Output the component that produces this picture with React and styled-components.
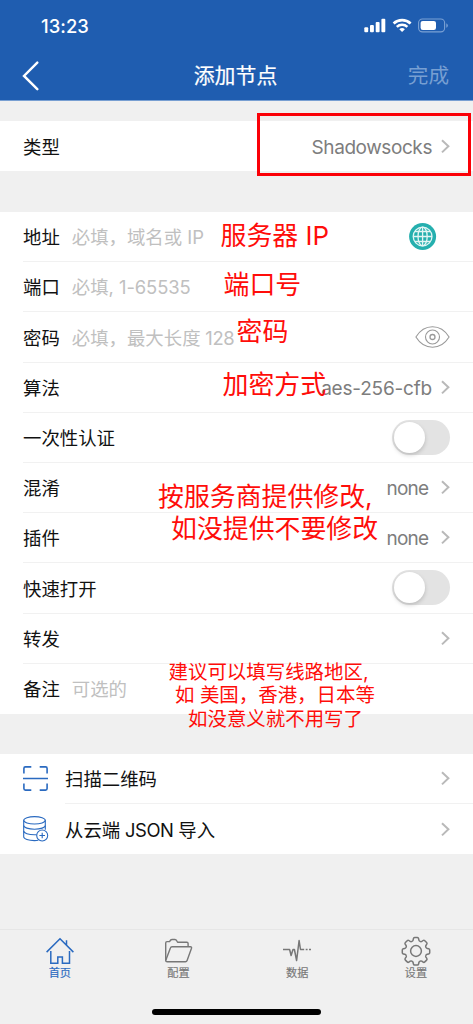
import React from 'react';
import styled, { createGlobalStyle } from 'styled-components';

const theme = {
    blue: '#1f5db0',
    iconBlue: '#2a6ac0',
    page: '#f0f0f0',
    line: '#f1f1f1',
    red: '#ff0d0a',
    grey: '#7d7d7d',
    placeholder: '#c0c0c0',
    font: "Inter, 'Noto Sans CJK SC', sans-serif",
};

const GlobalStyle = createGlobalStyle`
    * {
        box-sizing: border-box;
    }
    body {
        margin: 0;
        background: ${theme.page};
        font-family: ${theme.font};
    }
`;

const Screen = styled.div`
    position: relative;
    display: flex;
    flex-direction: column;
    width: 473px;
    height: 1024px;
    overflow: hidden;
    background: ${theme.page};
    color: #111;
`;

const Header = styled.header`
    height: 101px;
    flex: none;
    background: ${theme.blue};
    border-bottom: 1px solid #789fd2;
    color: #fff;
`;

const StatusBar = styled.div`
    display: flex;
    align-items: center;
    justify-content: space-between;
    height: 51px;
    padding: 0 24px 0 41px;
`;

const Time = styled.span`
    font-size: 18.4px;
    font-weight: 500;
    letter-spacing: 0.05px;
`;

const TitleBar = styled.div`
    display: grid;
    grid-template-columns: 1fr auto 1fr;
    align-items: center;
    height: 49px;
    padding: 0 24px 0 22px;
`;

const Title = styled.h1`
    margin: 0;
    font-size: 20.9px;
    font-weight: 400;
    line-height: 30px;
    -webkit-text-stroke: 0.2px #fff;
`;

const Done = styled.span`
    justify-self: end;
    padding-top: 1px;
    font-size: 20.6px;
    line-height: 30px;
    color: #779fd2;
`;

const Group = styled.section`
    flex: none;
    margin-top: ${props => props.gap}px;
    padding-left: ${props => props.inset || 23}px;
    background: #fff;
`;

const Row = styled.div`
    display: flex;
    align-items: center;
    height: ${props => props.height || 50.2}px;
    padding-right: 23px;
    border-bottom: 1px solid ${theme.line};
    font-size: 18.4px;
    line-height: 28px;
    &:last-child {
        border-bottom: 0;
    }
`;

const Label = styled.span`
    white-space: pre;
    padding-top: 1.4px;
`;

const Latin = styled.span`
    letter-spacing: ${props => props.tracking}px;
`;

const Placeholder = styled.span`
    margin-left: 12px;
    padding-top: 1.4px;
    color: ${theme.placeholder};
    white-space: pre;
`;

const Value = styled.span`
    padding-top: 3px;
    margin-right: ${props => props.shift || 0}px;
    font-size: 19px;
    color: ${theme.grey};
    letter-spacing: ${props => props.tracking || 0}px;
`;

const Trailing = styled.div`
    display: flex;
    align-items: center;
    gap: 9px;
    margin-left: auto;
    margin-right: ${props => props.shift || 0}px;
`;

const Toggle = styled.div`
    width: 58px;
    height: 35px;
    padding: 2px;
    border-radius: 18px;
    background: #e3e3e3;
    &::after {
        content: '';
        display: block;
        width: 31px;
        height: 31px;
        border-radius: 50%;
        background: #fff;
        box-shadow: 0 2px 4px rgba(0, 0, 0, 0.18);
    }
`;

const ActionIcon = styled.span`
    display: flex;
    width: 42px;
    margin-left: -42px;
`;

const TabBar = styled.nav`
    display: grid;
    grid-template-columns: repeat(4, 118.7px);
    height: 95px;
    flex: none;
    margin-top: auto;
    border-top: 1px solid #e6e6e6;
`;

const Tab = styled.div`
    display: flex;
    flex-direction: column;
    align-items: center;
    padding-top: 6px;
    padding-left: 1px;
    font-size: 11.2px;
    line-height: 14px;
    color: ${props => (props.active ? theme.iconBlue : '#777')};
    -webkit-text-stroke: 0.15px currentColor;
`;

const HomeIndicator = styled.div`
    position: absolute;
    left: 152px;
    bottom: 9px;
    width: 169px;
    height: 6px;
    border-radius: 3px;
    background: #000;
`;

// Red marker notes drawn over the form
const Note = styled.div`
    position: absolute;
    left: ${props => props.x}px;
    top: ${props => props.y}px;
    font-size: ${props => (props.small ? 19.45 : 25.9)}px;
    line-height: ${props => (props.small ? 23.3 : 31.5)}px;
    color: ${theme.red};
    white-space: pre;
`;

const NoteLine = styled.div`
    padding-left: ${props => props.indent || 0}px;
`;

const Frame = styled.div`
    position: absolute;
    left: 257px;
    top: 113px;
    width: 214px;
    height: 63px;
    border: 3px solid #fb0007;
`;

const Chevron = () => (
    <svg width="9" height="15" viewBox="0 0 9 15" fill="none" stroke="#b9b9b9" strokeWidth="2">
        <path d="M1 1.2 7.4 7.3 1 13.4" />
    </svg>
);

const BackIcon = () => (
    <svg width="18" height="30" viewBox="0 0 18 30" fill="none" stroke="#fff" strokeWidth="2.4" strokeLinecap="round">
        <path d="M15.3 1.6 2 14.900 15.300 28.200" />
    </svg>
);

const StatusIcons = () => (
    <svg width="85" height="16" viewBox="0 0 85 16" fill="#fff">
        <rect x="0.3" y="9.2" width="3.9" height="5" rx="1" />
        <rect x="6" y="7" width="3.9" height="7.2" rx="1" />
        <rect x="11.7" y="4" width="3.9" height="10.2" rx="1" />
        <rect x="17.4" y="0.8" width="3.9" height="13.4" rx="1" />
        <g fill="none" stroke="#fff">
            <path d="M29.6 5.5a12.4 12.4 0 0 1 17 0" strokeWidth="2.7" />
            <path d="M32.8 8.9a7.7 7.7 0 0 1 10.6 0" strokeWidth="2.5" />
        </g>
        <path d="M38.1 13.9 35.3 11.2a4.1 4.1 0 0 1 5.6 0z" />
        <rect x="54.6" y="1" width="26" height="12.9" rx="3.8" fill="none" stroke="#7ba1d4" strokeWidth="1.1" />
        <rect x="56.6" y="2.9" width="15.4" height="9.1" rx="2.2" />
        <path d="M82.3 5.2a2.5 2.5 0 0 1 0 4.6z" fill="#7ba1d4" />
    </svg>
);

const GlobeIcon = () => (
    <svg width="28" height="28" viewBox="0 0 28 28" fill="none" stroke="#e2f5f4" strokeWidth="1.3">
        <circle cx="13.6" cy="13.5" r="13.5" fill="#25afae" stroke="none" />
        <circle cx="13.6" cy="13.5" r="9.4" />
        <ellipse cx="13.6" cy="13.5" rx="4.6" ry="9.4" />
        <path d="M13.6 4.1v18.800M4.200 13.500h18.800M5.800 8.500h15.600M5.800 18.500h15.600" />
    </svg>
);

const EyeIcon = () => (
    <svg width="35" height="22" viewBox="0 0 35 22" fill="none" stroke="#999" strokeWidth="1.1">
        <path d="M.9 11C4.9 4.6 10.8.8 17.5.8S30.1 4.6 34.1 11c-4 6.4-9.9 10.2-16.6 10.2S4.9 17.4.9 11z" />
        <circle cx="17.5" cy="11" r="7" />
        <circle cx="17.5" cy="11" r="2.5" strokeWidth="1.3" />
    </svg>
);

const ScanIcon = () => (
    <svg width="25" height="25" viewBox="0 0 25 25" fill="none" stroke={theme.iconBlue} strokeWidth="1.6">
        <path d="M.9 7.6V2.4q0-1.500 1.500-1.500h5.900M16.700.9h5.900q1.500 0 1.500 1.500v5.200M24.100 17.400v5.200q0 1.500-1.500 1.500h-5.900M8.300 24.100H2.400q-1.500 0-1.500-1.500v-5.200M0 12.500h25" />
    </svg>
);

const CloudDataIcon = () => (
    <svg width="26" height="26" viewBox="0 0 26 26" fill="none" stroke={theme.iconBlue} strokeWidth="1.1">
        <ellipse cx="11.5" cy="4.3" rx="10.8" ry="3.7" />
        <path d="M.7 4.3v16.400c0 2.200 4.800 3.900 10.800 3.900 1.400 0 2.700-.1 3.900-.3M22.300 4.300v9.500" />
        <path d="M.7 9.500c0 2.100 4.800 3.700 10.800 3.700s10.800-1.600 10.800-3.700M.7 15.100c0 2.100 4.800 3.700 10.800 3.700.7 0 1.400 0 2.100-.1" />
        <circle cx="19.2" cy="19.5" r="5.5" />
        <path d="M19.2 16.700v5.600M16.400 19.500h5.600" />
    </svg>
);

const HomeIcon = () => (
    <svg width="30" height="30" viewBox="0 0 30 30" fill="none" stroke="currentColor" strokeWidth="1.5">
        <path d="M1.600 16.100 15 2.700l13.400 13.400M21.500 9V4.200" />
        <path d="M5.800 15v12.200h7v-6.300h4.600v6.300h7.100V15" />
    </svg>
);

const FolderIcon = () => (
    <svg width="30" height="30" viewBox="0 0 30 30" fill="none" stroke="currentColor" strokeWidth="1.4" strokeLinejoin="round">
        <path d="M1.700 24.500V6.900q0-1.300 1.300-1.300h2.500q1.200-2.100 2.500-2.100h3q1.300 0 2.600 2.700h9.300q1.200 0 1.200 1.200v3.300" />
        <path d="M1.700 24.500q0 1.200 1.500 1.200h18.300q1.200 0 1.600-1.200l4.400-12.300q.4-1.500-1.100-1.500H8q-1.200 0-1.600 1.200z" />
    </svg>
);

const PulseIcon = () => (
    <svg width="30" height="30" viewBox="0 0 30 30" fill="none" stroke="currentColor" strokeWidth="1.5" strokeLinejoin="round">
        <path d="M1 13.500h6.600l1.500 6L11 13.500h1.400l2.200 11L17.100 4.500l1.400 9h3.700M23.700 13.500h1.900M27 13.500h2" />
    </svg>
);

// Eight rounded teeth round the hub
const GearIcon = () => (
    <svg width="30" height="30" viewBox="0 0 30 30" fill="none" stroke="currentColor" strokeWidth="1.5" strokeLinejoin="round">
        <path d="M13.600 1.600h2.800q1 0 1.200 1l.3 1.500q.2.900 1.100 1.300 1 .5 1.800 0l1.300-.9q.9-.6 1.700.2l1.800 1.800q.8.800.2 1.700l-.9 1.300q-.5.800 0 1.800.4.900 1.300 1.100l1.500.3q1 .2 1 1.200v2.800q0 1-1 1.200l-1.500.3q-.9.200-1.300 1.100-.5 1 0 1.800l.9 1.300q.6.900-.2 1.700l-1.800 1.800q-.8.800-1.700.2l-1.300-.9q-.8-.5-1.800 0-.9.400-1.100 1.300l-.3 1.500q-.2 1-1.200 1h-2.800q-1 0-1.200-1l-.3-1.500q-.2-.9-1.100-1.300-1-.5-1.800 0l-1.300.9q-.9.600-1.700-.2l-1.800-1.800q-.8-.8-.2-1.700l.9-1.300q.5-.8 0-1.800-.4-.9-1.300-1.100l-1.500-.3q-1-.2-1-1.200v-2.800q0-1 1-1.200l1.500-.3q.9-.2 1.300-1.100.5-1 0-1.800l-.9-1.300q-.6-.9.200-1.700l1.800-1.800q.8-.8 1.700-.2l1.300.9q.8.500 1.800 0 .9-.4 1.100-1.300l.3-1.500q.2-1 1.200-1z" />
        <circle cx="15" cy="15" r="5.4" />
    </svg>
);

const Link = ({ value, tracking, shift }) => (
    <Trailing>
        {value && (
            <Value tracking={tracking} shift={shift}>
                {value}
            </Value>
        )}
        <Chevron />
    </Trailing>
);

const App = () => (
    <Screen lang="zh-CN">
        <GlobalStyle />
        <Header>
            <StatusBar>
                <Time>13:23</Time>
                <StatusIcons />
            </StatusBar>
            <TitleBar>
                <BackIcon />
                <Title>添加节点</Title>
                <Done>完成</Done>
            </TitleBar>
        </Header>

        <Group gap={20}>
            <Row height={50}>
                <Label>类型</Label>
                <Link value="Shadowsocks" tracking={-0.42} />
            </Row>
        </Group>

        <Group gap={41}>
            <Row>
                <Label>地址</Label>
                <Placeholder>必填，域名或 IP</Placeholder>
                <Trailing shift={13}>
                    <GlobeIcon />
                </Trailing>
            </Row>
            <Row>
                <Label>端口</Label>
                <Placeholder>
                    必填, <Latin tracking={-0.1}>1-65535</Latin>
                </Placeholder>
            </Row>
            <Row>
                <Label>密码</Label>
                <Placeholder>
                    必填，最大长度<Latin tracking={-0.4}> 128</Latin>
                </Placeholder>
                <Trailing>
                    <EyeIcon />
                </Trailing>
            </Row>
            <Row>
                <Label>算法</Label>
                <Link value="aes-256-cfb" tracking={-0.2} />
            </Row>
            <Row>
                <Label>一次性认证</Label>
                <Trailing>
                    <Toggle />
                </Trailing>
            </Row>
            <Row>
                <Label>混淆</Label>
                <Link value="none" tracking={-0.7} shift={3.5} />
            </Row>
            <Row>
                <Label>插件</Label>
                <Link value="none" tracking={-0.7} shift={3.5} />
            </Row>
            <Row>
                <Label>快速打开</Label>
                <Trailing>
                    <Toggle />
                </Trailing>
            </Row>
            <Row>
                <Label>转发</Label>
                <Link />
            </Row>
            <Row height={50}>
                <Label>备注</Label>
                <Placeholder>可选的</Placeholder>
            </Row>
        </Group>

        <Group gap={40.2} inset={65}>
            <Row>
                <ActionIcon>
                    <ScanIcon />
                </ActionIcon>
                <Label>扫描二维码</Label>
                <Link />
            </Row>
            <Row>
                <ActionIcon>
                    <CloudDataIcon />
                </ActionIcon>
                <Label>
                    从云端<Latin tracking={-0.4}> JSON </Latin>导入
                </Label>
                <Link />
            </Row>
        </Group>

        <TabBar>
            <Tab active>
                <HomeIcon />
                首页
            </Tab>
            <Tab>
                <FolderIcon />
                配置
            </Tab>
            <Tab>
                <PulseIcon />
                数据
            </Tab>
            <Tab>
                <GearIcon />
                设置
            </Tab>
        </TabBar>
        <HomeIndicator />

        <Frame />
        <Note x={220.5} y={220}>服务器 IP</Note>
        <Note x={223.5} y={269}>端口号</Note>
        <Note x={236.5} y={316}>密码</Note>
        <Note x={222.5} y={369}>加密方式</Note>
        <Note x={158} y={481}>
            <NoteLine>按服务商提供修改,</NoteLine>
            <NoteLine indent={13}>如没提供不要修改</NoteLine>
        </Note>
        <Note small x={168.5} y={661}>
            <NoteLine>建议可以填写线路地区,</NoteLine>
            <NoteLine indent={6.5}>如 美国，香港，日本等</NoteLine>
            <NoteLine indent={19.5}>如没意义就不用写了</NoteLine>
        </Note>
    </Screen>
);

export default App;
